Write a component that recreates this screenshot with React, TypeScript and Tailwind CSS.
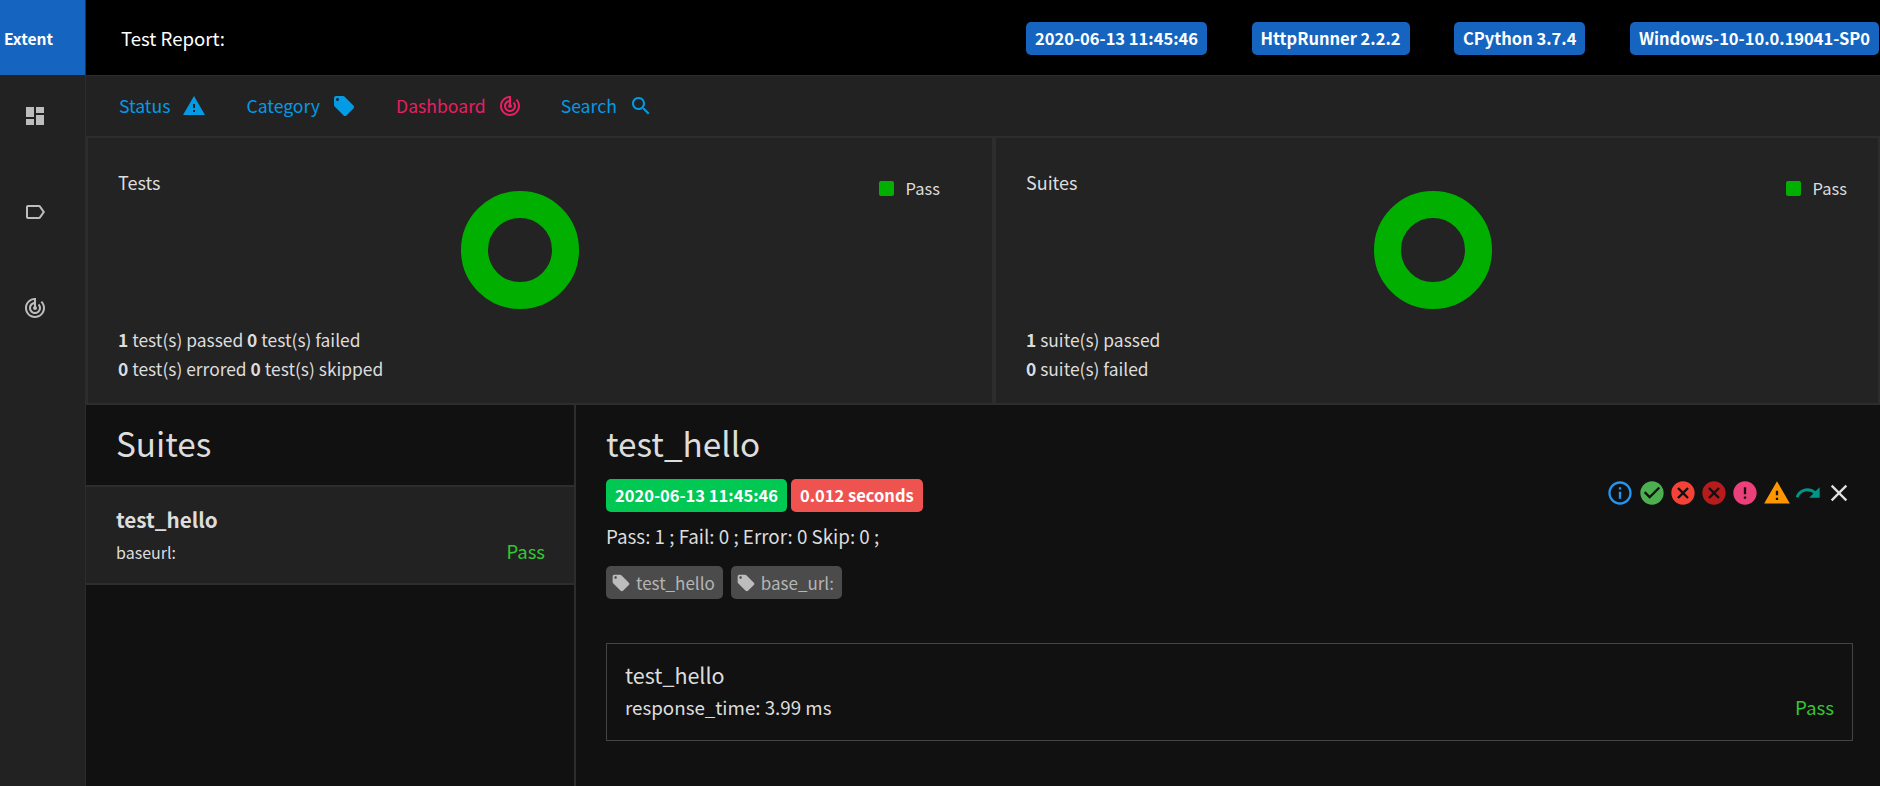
const P = {
  dashboard: "M3 13h8V3H3v10zm0 8h8v-6H3v6zm10 0h8V11h-8v10zm0-18v6h8V3h-8z",
  label: "M17.63 5.84C17.27 5.33 16.67 5 16 5L5 5.01C3.9 5.01 3 5.9 3 7v10c0 1.1.9 1.99 2 1.99L16 19c.67 0 1.27-.33 1.63-.84L22 12l-4.37-6.16zM16 17H5V7h11l3.55 5L16 17z",
  track: "M19.07 4.93l-1.41 1.41C19.1 7.79 20 9.79 20 12c0 4.42-3.58 8-8 8s-8-3.58-8-8c0-4.08 3.05-7.44 7-7.93v2.02C8.16 6.57 6 9.03 6 12c0 3.31 2.69 6 6 6s6-2.69 6-6c0-1.66-.67-3.16-1.76-4.24l-1.41 1.41C15.55 9.9 16 10.9 16 12c0 2.21-1.79 4-4 4s-4-1.79-4-4c0-1.86 1.28-3.41 3-3.86v2.14c-.6.35-1 .98-1 1.72 0 1.1.9 2 2 2s2-.9 2-2c0-.74-.4-1.38-1-1.72V2h-1C6.48 2 2 6.48 2 12s4.48 10 10 10 10-4.48 10-10c0-2.76-1.12-5.26-2.93-7.07z",
  warning: "M1 21h22L12 2 1 21zm12-3h-2v-2h2v2zm0-4h-2v-4h2v4z",
  tag: "M21.41 11.58l-9-9C12.05 2.22 11.55 2 11 2H4c-1.1 0-2 .9-2 2v7c0 .55.22 1.05.59 1.42l9 9c.36.36.86.58 1.41.58.55 0 1.05-.22 1.41-.59l7-7c.37-.36.59-.86.59-1.41 0-.55-.23-1.06-.59-1.42zM5.5 7C4.67 7 4 6.33 4 5.5S4.67 4 5.5 4 7 4.67 7 5.5 6.33 7 5.5 7z",
  search: "M15.5 14h-.79l-.28-.27C15.41 12.59 16 11.11 16 9.5 16 5.91 13.09 3 9.5 3S3 5.91 3 9.5 5.91 16 9.5 16c1.61 0 3.09-.59 4.23-1.57l.27.28v.79l5 4.99L20.49 19l-4.99-5zm-6 0C7.01 14 5 11.99 5 9.5S7.01 5 9.5 5 14 7.01 14 9.5 11.99 14 9.5 14z",
  info: "M11 17h2v-6h-2v6zm1-15C6.48 2 2 6.48 2 12s4.48 10 10 10 10-4.48 10-10S17.52 2 12 2zm0 18c-4.41 0-8-3.59-8-8s3.59-8 8-8 8 3.59 8 8-3.59 8-8 8zM11 9h2V7h-2v2z",
  check: "M12 2C6.48 2 2 6.48 2 12s4.48 10 10 10 10-4.48 10-10S17.52 2 12 2zm-2 15l-5-5 1.41-1.41L10 14.17l7.59-7.59L19 8l-9 9z",
  cancel: "M12 2C6.47 2 2 6.47 2 12s4.47 10 10 10 10-4.47 10-10S17.53 2 12 2zm5 13.59L15.59 17 12 13.41 8.41 17 7 15.59 10.59 12 7 8.41 8.41 7 12 10.59 15.59 7 17 8.41 13.41 12 17 15.59z",
  error: "M12 2C6.48 2 2 6.48 2 12s4.48 10 10 10 10-4.48 10-10S17.52 2 12 2zm1 15h-2v-2h2v2zm0-4h-2V7h2v6z",
  redo: "M18.4 10.6C16.55 8.99 14.15 8 11.5 8c-4.65 0-8.58 3.03-9.96 7.22L3.9 16c1.05-3.19 4.05-5.5 7.6-5.5 1.95 0 3.73.72 5.12 1.88L13 16h9V7l-3.6 3.6z",
  clear: "M19 6.41L17.59 5 12 10.59 6.41 5 5 6.41 10.59 12 5 17.59 6.41 19 12 13.41 17.59 19 19 17.59 13.41 12 19 6.41z",
};

function Icon({ d, className }: { d: string; className: string }) {
  return (
    <svg viewBox="0 0 24 24" fill="currentColor" className={className}>
      <path d={d} />
    </svg>
  );
}

function Donut() {
  return (
    <svg viewBox="0 0 118 118" className="h-[118px] w-[118px]">
      <circle cx="59" cy="59" r="45.5" fill="none" stroke="#00af00" strokeWidth="27" />
    </svg>
  );
}

function Card({
  title,
  donutClass,
  lines,
  className,
}: {
  title: string;
  donutClass: string;
  lines: React.ReactNode[];
  className: string;
}) {
  return (
    <section className={"flex h-[269px] flex-col border-2 border-[#2d2d2d] bg-[#232323] " + className}>
      <div className="flex h-[170px] items-start">
        <h3 className="pt-[31px] pl-[30px] text-[18px] leading-[26px] text-[#dddddd]">{title}</h3>
        <div className={"flex flex-1 items-start justify-between pt-[53px] " + donutClass}>
          <Donut />
          <div className="-mt-[16px] flex h-[26px] items-center">
            <span className="h-[15px] w-[15px] rounded-[2px] bg-[#00af00]" />
            <span className="ml-[12px] text-[16.5px] leading-[24px] text-[#dddddd]">Pass</span>
          </div>
        </div>
      </div>
      <div className="mt-[17px] pl-[30px] text-[17.4px] leading-[29px] text-[#dddddd]">
        {lines.map((l, i) => (
          <div key={i}>{l}</div>
        ))}
      </div>
    </section>
  );
}

const chip = "flex h-[33px] items-center rounded-[5px] bg-[#4b4b4b] pr-[8px] pl-[5px] text-[17px] text-[#b5b5b5]";
const badge = "flex h-[33px] items-center rounded-[5px] bg-[#1565c0] px-[9px] text-[16.5px] font-bold text-white";
const status = "h-[28px] w-[28px] ";
const tagIcon = "mr-[5px] h-[20px] w-[20px] text-[#bdbdbd]";

export default function App() {
  return (
    <div
      className="flex h-[786px] w-[1880px] overflow-hidden bg-[#111111] text-[#dddddd]"
      style={{ fontFamily: '"Noto Sans CJK SC", "Noto Sans", sans-serif' }}
    >
      <aside className="flex w-[86px] shrink-0 flex-col border-r border-[#2d2d2d] bg-[#222222]">
        <div className="flex h-[75px] items-center bg-[#1565c0] pt-[3px] pl-[4px] text-[15.6px] font-bold text-white">Extent</div>
        <div className="flex flex-col gap-[72px] pt-[29px] pl-[23px] text-[#bdbdbd]">
          <Icon d={P.dashboard} className="h-[24px] w-[24px]" />
          <Icon d={P.label} className="h-[24px] w-[24px]" />
          <Icon d={P.track} className="h-[24px] w-[24px]" />
        </div>
      </aside>

      <main className="flex min-w-0 flex-1 flex-col">
        <header className="flex h-[76px] shrink-0 items-center border-b border-[#2d2d2d] bg-black pt-[2px]">
          <div className="-mt-[2px] pl-[35px] text-[18.6px] leading-[26px] text-white">Test Report:</div>
          <div className="ml-auto flex items-center gap-[44.5px] pr-px">
            <div className={badge}>2020-06-13 11:45:46</div>
            <div className={badge}>HttpRunner 2.2.2</div>
            <div className={badge}>CPython 3.7.4</div>
            <div className={badge}>Windows-10-10.0.19041-SP0</div>
          </div>
        </header>

        <nav className="flex h-[60px] shrink-0 items-center bg-[#222222] pl-[33px] text-[17.6px] text-[#039be5]">
          <div className="flex items-center">
            <span>Status</span>
            <Icon d={P.warning} className="ml-[12px] h-[24px] w-[24px]" />
          </div>
          <div className="ml-[40px] flex items-center">
            <span>Category</span>
            <Icon d={P.tag} className="ml-[12px] h-[24px] w-[24px]" />
          </div>
          <div className="ml-[40px] flex items-center text-[#e91e63]">
            <span>Dashboard</span>
            <Icon d={P.track} className="ml-[12px] h-[24px] w-[24px]" />
          </div>
          <div className="ml-[39px] flex items-center">
            <span>Search</span>
            <Icon d={P.search} className="ml-[12px] h-[24px] w-[24px]" />
          </div>
        </nav>

        <div className="flex shrink-0">
          <Card
            title="Tests"
            className="w-[908px]"
            donutClass="pl-[301px] pr-[52px]"
            lines={[
              <><b className="font-semibold">1</b> test(s) passed <b className="font-semibold">0</b> test(s) failed</>,
              <><b className="font-semibold">0</b> test(s) errored <b className="font-semibold">0</b> test(s) skipped</>,
            ]}
          />
          <Card
            title="Suites"
            className="flex-1"
            donutClass="pl-[296px] pr-[31px]"
            lines={[
              <><b className="font-semibold">1</b> suite(s) passed</>,
              <><b className="font-semibold">0</b> suite(s) failed</>,
            ]}
          />
        </div>

        <div className="flex min-h-0 flex-1">
          <div className="w-[490px] shrink-0 border-r-2 border-[#2d2d2d] bg-[#111111]">
            <div className="flex h-[82px] items-center border-b-2 border-[#2d2d2d] pb-[4px] pl-[30px]">
              <h2 className="text-[33.3px] leading-[40px] text-[#dddddd]">Suites</h2>
            </div>
            <div className="h-[98px] border-b-2 border-[#2d2d2d] bg-[#222222] pt-[17px] pr-[29px] pl-[30px]">
              <div className="text-[20.7px] leading-[30px] font-semibold text-[#dddddd]">test_hello</div>
              <div className="mt-[6px] flex items-center justify-between">
                <span className="text-[16px] leading-[24px]">baseurl:</span>
                <span className="-translate-y-[1px] text-[18.5px] leading-[24px] text-[#32c832]">Pass</span>
              </div>
            </div>
          </div>

          <div className="min-w-0 flex-1 pt-[18px] pl-[30px]">
            <h2 className="text-[33.3px] leading-[40px] text-[#dddddd]">test_hello</h2>
            <div className="mt-[16px] flex items-start justify-between pr-[27px]">
              <div className="flex gap-[4px]">
                <div className="flex h-[33px] items-center rounded-[5px] bg-[#00c853] px-[9px] text-[16.5px] font-bold text-white">2020-06-13 11:45:46</div>
                <div className="flex h-[33px] items-center rounded-[5px] bg-[#ef5350] px-[9px] text-[16.5px] font-bold text-white">0.012 seconds</div>
              </div>
              <div className="flex gap-[3.25px]">
                <Icon d={P.info} className={status + "text-[#2196f3]"} />
                <Icon d={P.check} className={status + "text-[#4caf50]"} />
                <Icon d={P.cancel} className={status + "text-[#f44336]"} />
                <Icon d={P.cancel} className={status + "text-[#b71c1c]"} />
                <Icon d={P.error} className={status + "text-[#ec407a]"} />
                <Icon d={P.warning} className={status + "text-[#ff9800]"} />
                <Icon d={P.redo} className={status + "text-[#009688]"} />
                <Icon d={P.clear} className={status + "text-[#e0e0e0]"} />
              </div>
            </div>
            <div className="mt-[11px] text-[18.8px] leading-[26px]">Pass: 1 ; Fail: 0 ; Error: 0 Skip: 0 ;</div>
            <div className="mt-[17px] flex gap-[8px]">
              <div className={chip}>
                <Icon d={P.tag} className={tagIcon} />
                test_hello
              </div>
              <div className={chip}>
                <Icon d={P.tag} className={tagIcon} />
                base_url:
              </div>
            </div>
            <div className="mt-[44px] mr-[27px] h-[98px] border border-[#444444] px-[18px] pt-[16px]">
              <div className="text-[21.5px] leading-[30px]">test_hello</div>
              <div className="mt-[4px] flex items-center justify-between text-[18.76px] leading-[26px]">
                <span>response_time: 3.99 ms</span>
                <span className="text-[#32c832]">Pass</span>
              </div>
            </div>
          </div>
        </div>
      </main>
    </div>
  );
}
